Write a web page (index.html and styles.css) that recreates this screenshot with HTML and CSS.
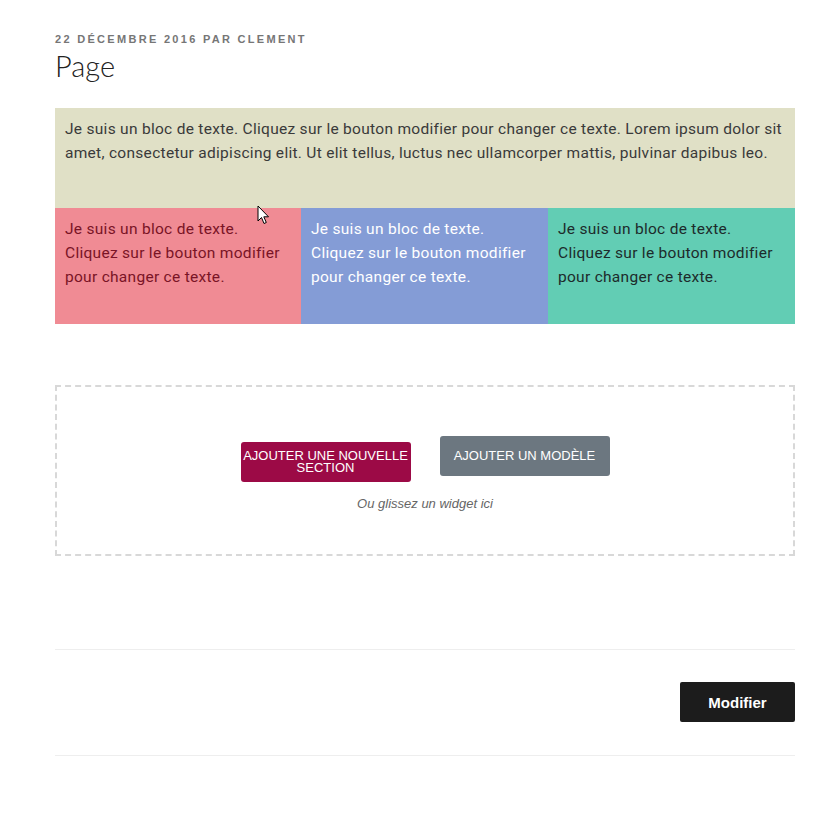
FILE: index.html
```html
<!DOCTYPE html>
<html lang="fr">
<head>
<meta charset="utf-8">
<title>Page</title>
<link rel="stylesheet" href="styles.css">
</head>
<body>
<div class="page">
  <header class="entry-header">
    <div class="meta">22 décembre 2016 par Clement</div>
    <h1 class="title">Page</h1>
  </header>

  <div class="builder">
    <div class="sec-top">
      <p>Je suis un bloc de texte. Cliquez sur le bouton modifier pour changer ce texte. Lorem ipsum dolor sit amet, consectetur adipiscing elit. Ut elit tellus, luctus nec ullamcorper mattis, pulvinar dapibus leo.</p>
    </div>
    <div class="cols">
      <div class="col col-pink"><p>Je suis un bloc de texte. Cliquez sur le bouton modifier pour changer ce texte.</p></div>
      <div class="col col-blue"><p>Je suis un bloc de texte. Cliquez sur le bouton modifier pour changer ce texte.</p></div>
      <div class="col col-teal"><p>Je suis un bloc de texte. Cliquez sur le bouton modifier pour changer ce texte.</p></div>
    </div>
    <svg class="cursor" width="13" height="20" viewBox="0 0 13 20">
      <path d="M1 1 L1 16 L4.5 12.5 L7 18.5 L9.3 17.5 L6.8 11.8 L11.5 11.8 Z" fill="#fff" stroke="#000" stroke-width="1" stroke-linejoin="miter"/>
    </svg>
  </div>

  <div class="dropzone">
    <div class="btns">
      <button class="btn btn-add">Ajouter une nouvelle section</button>
      <button class="btn btn-tpl">Ajouter un modèle</button>
    </div>
    <div class="hint">Ou glissez un widget ici</div>
  </div>

  <footer class="entry-footer">
    <button class="edit">Modifier</button>
  </footer>
</div>
</body>
</html>
```

FILE: styles.css
```css
* { box-sizing: border-box; }
body {
  margin: 0;
  background: #fff;
  font-family: "Liberation Sans", Arial, sans-serif;
}
.page {
  width: 740px;
  margin-left: 55px;
  padding-top: 30px;
}
.meta {
  font-family: "Liberation Sans", Arial, sans-serif;
  font-weight: 700;
  font-size: 11px;
  line-height: 18px;
  letter-spacing: 2.3px;
  text-transform: uppercase;
  color: #767676;
}
.title {
  margin: 0;
  font-family: Lato, "Liberation Sans", sans-serif;
  font-weight: 300;
  font-size: 29px;
  line-height: 36px;
  color: #222;
}
.builder {
  position: relative;
  margin-top: 24px;
  font-family: Roboto, "Liberation Sans", sans-serif;
  font-size: 15.5px;
  letter-spacing: 0.29px;
  line-height: 24px;
}
.builder p { margin: 0; }
.sec-top {
  height: 100px;
  background: #e0e0c6;
  padding: 9px 8px 9px 10px;
  color: #3a3a3a;
}
.cols {
  display: grid;
  grid-template-columns: 246px 247px 247px;
  height: 116px;
}
.col { padding: 9px 16px 9px 10px; }
.col-pink { background: #f08b94; color: #7a1426; }
.col-blue { background: #849cd6; color: #fff; }
.col-teal { background: #62cdb4; color: #1d2b2b; }
.cursor {
  position: absolute;
  left: 202px;
  top: 97px;
}
.dropzone {
  margin-top: 61px;
  height: 171px;
  width: 740px;
  border: 2px dashed #d8d8d8;
  display: flex;
  flex-direction: column;
  align-items: center;
  padding-top: 49px;
}
.btns {
  display: flex;
  gap: 29px;
  align-items: flex-start;
}
.btn {
  width: 170px;
  height: 40px;
  border: 0;
  border-radius: 3px;
  color: #fff;
  font-family: "Liberation Sans", Arial, sans-serif;
  font-size: 13px;
  line-height: 12px;
  text-transform: uppercase;
  padding: 0 1px;
  cursor: pointer;
}
.btn-add {
  background: #9c0a46;
  margin-top: 6px;
}
.btn-tpl {
  background: #6c7780;
}
.hint {
  margin-top: 14px;
  font-family: "Liberation Sans", Arial, sans-serif;
  font-style: italic;
  font-size: 13px;
  line-height: 16px;
  color: #666;
}
.entry-footer {
  margin-top: 93px;
  width: 740px;
  border-top: 1px solid #eee;
  border-bottom: 1px solid #eee;
  padding: 32px 0 33px;
  display: flex;
  justify-content: flex-end;
}
.edit {
  width: 115px;
  height: 40px;
  background: #1c1c1c;
  color: #fff;
  border: 0;
  border-radius: 2px;
  font-family: "Liberation Sans", Arial, sans-serif;
  font-weight: 700;
  font-size: 15px;
}
```
